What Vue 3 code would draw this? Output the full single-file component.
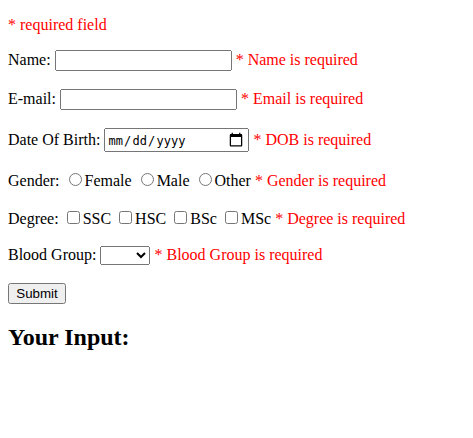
<script setup>
import { ref } from 'vue'
const genders = ['Female', 'Male', 'Other']
const degrees = ['SSC', 'HSC', 'BSc', 'MSc']
const gender = ref('')
const degree = ref([])
</script>

<template>
  <main class="page">
    <p class="error note">* required field</p>
    <form @submit.prevent>
      <div class="row">Name: <input class="text" type="text"> <span class="error">* Name is required</span></div>
      <div class="row">E-mail: <input class="text" type="text"> <span class="error">* Email is required</span></div>
      <div class="row">Date Of Birth: <input class="date" type="date"> <span class="error">* DOB is required</span></div>
      <div class="row">Gender: <template v-for="g in genders" :key="g"><input v-model="gender" type="radio" :value="g">{{ g + ' ' }}</template><span class="error">* Gender is required</span></div>
      <div class="row">Degree: <template v-for="d in degrees" :key="d"><input v-model="degree" type="checkbox" :value="d">{{ d + ' ' }}</template><span class="error">* Degree is required</span></div>
      <div class="row">Blood Group: <select class="blood"><option></option><option>A+</option></select> <span class="error">* Blood Group is required</span></div>
      <input class="submit" type="submit" value="Submit">
    </form>
    <h2>Your Input:</h2>
  </main>
</template>

<style scoped>
.page { padding: 16px 8px; font: 16px "Liberation Serif", "Times New Roman", serif; color: #000; }
.error { color: #f00; }
.note { margin: 0 0 16px; }
.row { margin-bottom: 18px; white-space: nowrap; }
.text { box-sizing: border-box; width: 177px; height: 21px; }
.date { box-sizing: border-box; width: 145px; height: 24px; padding: 2px 1px 0; font: 12px "DejaVu Sans Mono", monospace; letter-spacing: 0.1px; }
.date::-webkit-calendar-picker-indicator { box-sizing: border-box; width: 16px; height: 16px; margin: -2px 2px 0 24px; padding: 0; }
.blood { width: 50px; }
.submit { box-sizing: border-box; width: 58px; height: 21px; padding: 1px 6px; }
h2 { margin: 20px 0; font-size: 24px; }
</style>
